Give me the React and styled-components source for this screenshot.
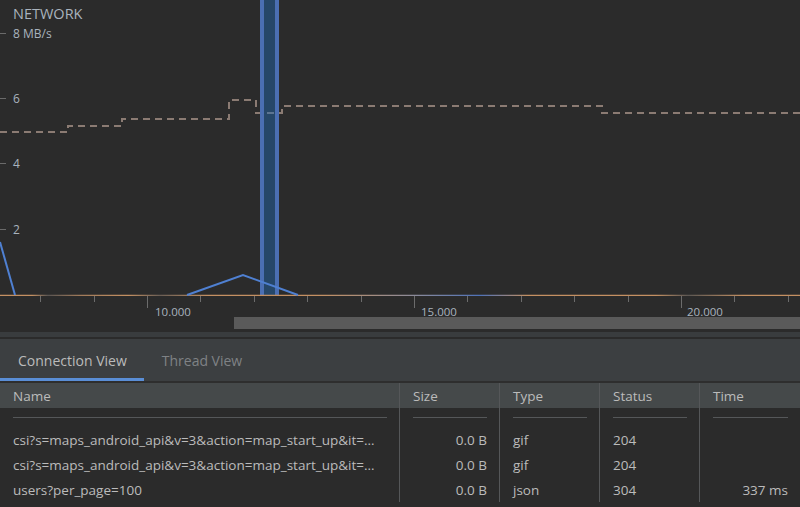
import React from 'react';
import styled, { createGlobalStyle } from 'styled-components';

const GlobalStyle = createGlobalStyle`
  html, body {
    margin: 0;
    padding: 0;
    background: #2b2b2b;
  }
  body {
    font-family: "Open Sans", "Noto Sans", "Liberation Sans", sans-serif;
    overflow: hidden;
  }
`;

const Page = styled.div`
  width: 800px;
  height: 507px;
  display: flex;
  flex-direction: column;
  overflow: hidden;
  background: #2b2b2b;
`;

const ChartPanel = styled.section`
  display: flex;
  flex-direction: column;
  padding-bottom: 3px;
  background: #2b2b2b;
`;

const Plot = styled.svg`
  display: block;
  width: 800px;
  height: 296px;
`;

const Axis = styled.svg`
  display: block;
  width: 800px;
  height: 21px;
  overflow: visible;
`;

const ScrollTrack = styled.div`
  display: flex;
  height: 12px;
  padding-left: 234px;
`;

const ScrollThumb = styled.div`
  flex: 1;
  background: #5a5a5a;
`;

const Splitter = styled.div`
  height: 5px;
  background: #393c3e;
  border-bottom: 2px solid #2b2b2b;
`;

const TabBar = styled.nav`
  display: flex;
  height: 42px;
  background: #3c3f41;
  border-bottom: 2px solid #2e2e2e;
`;

const Tab = styled.div`
  display: flex;
  align-items: center;
  padding: 4px 17px 0 18px;
  font-size: 14px;
  color: ${p => (p.active ? '#bbbbbb' : '#7f8285')};
  border-bottom: 3px solid ${p => (p.active ? '#5a8ed6' : 'transparent')};
`;

const Table = styled.div`
  display: grid;
  grid-template-columns: 399px 100px 100px 100px 1fr;
  font-size: 13.5px;
  color: #bbbbbb;
`;

const HeadCell = styled.div`
  height: 25px;
  display: flex;
  align-items: center;
  padding: 1px 12px 0 13px;
  box-sizing: border-box;
  background: #45494a;
  border-left: ${p => (p.first ? 'none' : '1px solid #555759')};
`;

const FilterCell = styled.div`
  height: 19px;
  padding: 9px 12px 0 13px;
  box-sizing: border-box;
  border-left: ${p => (p.first ? 'none' : '1px solid #555759')};
`;

const FilterLine = styled.div`
  border-top: 1px solid #555759;
`;

const Cell = styled.div`
  height: 25px;
  display: flex;
  align-items: center;
  justify-content: ${p => (p.right ? 'flex-end' : 'flex-start')};
  padding: 0 12px 0 13px;
  min-width: 0;
  overflow: hidden;
  border-left: ${p => (p.first ? 'none' : '1px solid #555759')};
`;

const Ellipsis = styled.span`
  min-width: 0;
  white-space: nowrap;
  overflow: hidden;
  text-overflow: ellipsis;
`;

const labelFont = '"Open Sans", "Noto Sans", sans-serif';

const yTicks = [
  { y: 33, label: '8 MB/s' },
  { y: 98, label: '6' },
  { y: 163, label: '4' },
  { y: 229, label: '2' },
];

const NetworkPlot = () => (
  <Plot viewBox="0 0 800 296">
    <defs>
      <linearGradient id="axisGrad" x1="0" x2="800" y1="0" y2="0" gradientUnits="userSpaceOnUse">
        <stop offset="0" stopColor="#c49062" />
        <stop offset="0.04" stopColor="#c49062" />
        <stop offset="0.06" stopColor="#5a5552" />
        <stop offset="0.1" stopColor="#a07a5a" />
        <stop offset="0.16" stopColor="#c49062" />
        <stop offset="0.2" stopColor="#6a5e55" />
        <stop offset="0.26" stopColor="#c49062" />
        <stop offset="0.4" stopColor="#c49062" />
        <stop offset="0.52" stopColor="#8a8a9a" />
        <stop offset="0.6" stopColor="#4f72b8" />
        <stop offset="0.66" stopColor="#c49062" />
        <stop offset="0.82" stopColor="#c49062" />
        <stop offset="0.86" stopColor="#5c5753" />
        <stop offset="0.93" stopColor="#c49062" />
        <stop offset="1" stopColor="#c49062" />
      </linearGradient>
    </defs>
    <text x="13" y="19" fontSize="14.5" fill="#a9b3be" fontFamily={labelFont}>NETWORK</text>
    {yTicks.map(t => (
      <g key={t.label}>
        <line x1="0" x2="6" y1={t.y + 0.5} y2={t.y + 0.5} stroke="#6a6a6a" />
        <text x="13" y={t.y + 5} fontSize="12" fill="#a9b3be" fontFamily={labelFont}>{t.label}</text>
      </g>
    ))}
    <path
      d="M0 132 H68 V126 H122 V119 H229 V100 H256 V113 H282 V106 H602 V113 H800"
      fill="none"
      stroke="#8b7b73"
      strokeWidth="2"
      strokeDasharray="7 5"
    />
    <rect x="260" y="0" width="19" height="295" fill="rgba(30,110,190,0.42)" />
    <rect x="260" y="0" width="4" height="295" fill="#4b6fb3" />
    <rect x="275" y="0" width="4" height="295" fill="#4b6fb3" />
    <line x1="0" x2="800" y1="295.5" y2="295.5" stroke="url(#axisGrad)" strokeWidth="1.5" />
    <polyline points="0,242 15,295" fill="none" stroke="#4f80d2" strokeWidth="2" />
    <polyline points="187,295 243,275 298,295" fill="none" stroke="#4f80d2" strokeWidth="2" />
  </Plot>
);

const tickStep = 267 / 5;
const ticks = Array.from({ length: 15 }, (_, i) => {
  const x = Math.round(147 + (i - 2) * tickStep);
  return { x, major: (i - 2) % 5 === 0 };
});
const timeLabels = [
  { x: 155, text: '10.000' },
  { x: 421, text: '15.000' },
  { x: 687, text: '20.000' },
];

const TimeAxis = () => (
  <Axis viewBox="0 0 800 21">
    {ticks.map(t => (
      <line key={t.x} x1={t.x + 0.5} x2={t.x + 0.5} y1="0" y2={t.major ? 12 : 6} stroke="#6c6c6c" />
    ))}
    {timeLabels.map(l => (
      <text key={l.text} x={l.x} y="20" fontSize="11.5" fill="#a9b3be" fontFamily={labelFont}>{l.text}</text>
    ))}
  </Axis>
);

const columns = ['Name', 'Size', 'Type', 'Status', 'Time'];

const rows = [
  { name: 'csi?s=maps_android_api&v=3&action=map_start_up&it=…', size: '0.0 B', type: 'gif', status: '204', time: '' },
  { name: 'csi?s=maps_android_api&v=3&action=map_start_up&it=…', size: '0.0 B', type: 'gif', status: '204', time: '' },
  { name: 'users?per_page=100', size: '0.0 B', type: 'json', status: '304', time: '337 ms' },
];

export default function App() {
  return (
    <Page>
      <GlobalStyle />
      <ChartPanel>
        <NetworkPlot />
        <TimeAxis />
        <ScrollTrack>
          <ScrollThumb />
        </ScrollTrack>
      </ChartPanel>
      <Splitter />
      <TabBar>
        <Tab active>Connection View</Tab>
        <Tab>Thread View</Tab>
      </TabBar>
      <Table>
        {columns.map((c, i) => (
          <HeadCell key={c} first={i === 0}>{c}</HeadCell>
        ))}
        {columns.map((c, i) => (
          <FilterCell key={c} first={i === 0}>
            <FilterLine />
          </FilterCell>
        ))}
        {rows.map((r, i) => (
          <React.Fragment key={i}>
            <Cell first><Ellipsis>{r.name}</Ellipsis></Cell>
            <Cell right>{r.size}</Cell>
            <Cell>{r.type}</Cell>
            <Cell>{r.status}</Cell>
            <Cell right>{r.time}</Cell>
          </React.Fragment>
        ))}
      </Table>
    </Page>
  );
}
